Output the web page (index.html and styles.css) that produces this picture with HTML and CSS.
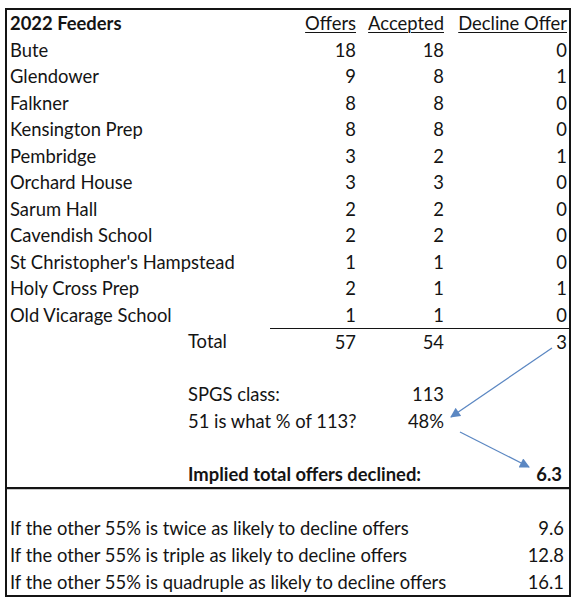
FILE: index.html
```html
<!DOCTYPE html>
<html>
<head>
<meta charset="utf-8">
<link rel="stylesheet" href="styles.css">
</head>
<body>
<div class="sheet">
  <div class="top">
    <div class="cell name bold">2022 Feeders</div>
    <div class="cell num"><span class="u">Offers</span></div>
    <div class="cell num"><span class="u">Accepted</span></div>
    <div class="cell num"><span class="u">Decline Offer</span></div>

    <div class="cell name">Bute</div><div class="cell num">18</div><div class="cell num">18</div><div class="cell num">0</div>
    <div class="cell name">Glendower</div><div class="cell num">9</div><div class="cell num">8</div><div class="cell num">1</div>
    <div class="cell name">Falkner</div><div class="cell num">8</div><div class="cell num">8</div><div class="cell num">0</div>
    <div class="cell name">Kensington Prep</div><div class="cell num">8</div><div class="cell num">8</div><div class="cell num">0</div>
    <div class="cell name">Pembridge</div><div class="cell num">3</div><div class="cell num">2</div><div class="cell num">1</div>
    <div class="cell name">Orchard House</div><div class="cell num">3</div><div class="cell num">3</div><div class="cell num">0</div>
    <div class="cell name">Sarum Hall</div><div class="cell num">2</div><div class="cell num">2</div><div class="cell num">0</div>
    <div class="cell name">Cavendish School</div><div class="cell num">2</div><div class="cell num">2</div><div class="cell num">0</div>
    <div class="cell name">St Christopher's Hampstead</div><div class="cell num">1</div><div class="cell num">1</div><div class="cell num">0</div>
    <div class="cell name">Holy Cross Prep</div><div class="cell num">2</div><div class="cell num">1</div><div class="cell num">1</div>
    <div class="cell name">Old Vicarage School</div><div class="cell num">1</div><div class="cell num">1</div><div class="cell num">0</div>

    <div class="cell colb">Total</div><div class="cell num ruled">57</div><div class="cell num ruled">54</div><div class="cell num ruled">3</div>

    <div class="cell blank"></div>

    <div class="cell colb-c">SPGS class:</div><div class="cell num">113</div><div class="cell filler"></div>
    <div class="cell colb-c">51 is what % of 113?</div><div class="cell num">48%</div><div class="cell filler"></div>

    <div class="cell blank"></div>

    <div class="cell colb-d bold">Implied total offers declined:</div><div class="cell num bold result">6.3</div>
  </div>
  <div class="bottom">
    <div class="cell blank2"></div>
    <div class="cell">If the other 55% is twice as likely to decline offers</div><div class="cell num">9.6</div>
    <div class="cell">If the other 55% is triple as likely to decline offers</div><div class="cell num">12.8</div>
    <div class="cell">If the other 55% is quadruple as likely to decline offers</div><div class="cell num">16.1</div>
  </div>
</div>
<svg class="arrows" width="575" height="600" viewBox="0 0 575 600">
  <defs>
    <marker id="head" viewBox="0 0 10 10" refX="9" refY="5" markerWidth="11" markerHeight="10" markerUnits="userSpaceOnUse" orient="auto">
      <path d="M0 0 L10 5 L0 10 Z" fill="#5b87c2"/>
    </marker>
  </defs>
  <line x1="552" y1="348" x2="451" y2="417" stroke="#5b87c2" stroke-width="1.3" marker-end="url(#head)"/>
  <line x1="460" y1="432" x2="529" y2="467" stroke="#5b87c2" stroke-width="1.3" marker-end="url(#head)"/>
</svg>
</body>
</html>
```

FILE: styles.css
```css
html, body {
  margin: 0;
  padding: 0;
  background: #ffffff;
}

body {
  position: relative;
  width: 575px;
  height: 600px;
  font-family: Lato, "Open Sans", sans-serif;
  font-size: 18.4px;
  color: #141414;
}

.sheet {
  position: absolute;
  left: 5px;
  top: 8px;
  width: 562px;
  border: 2px solid #141414;
}

.top {
  display: grid;
  grid-template-columns: 178px 85px 88px 88px 123px;
  grid-auto-rows: 26.5px;
  border-bottom: 2px solid #141414;
}

.cell {
  display: flex;
  align-items: center;
  white-space: nowrap;
  padding-left: 3px;
}

.name {
  grid-column: 1 / span 2;
}

.num {
  justify-content: flex-end;
  padding-left: 0;
  padding-right: 2px;
}

.bold {
  font-weight: 700;
}

.u {
  text-decoration: underline;
  text-underline-offset: 2px;
  text-decoration-thickness: 1px;
}

.colb {
  grid-column: 2 / span 1;
}

.ruled {
  border-top: 1.5px solid #141414;
}

.blank {
  grid-column: 1 / span 5;
}

.colb-c {
  grid-column: 2 / span 2;
}

.filler {
  grid-column: 5 / span 1;
}

.colb-d {
  grid-column: 2 / span 3;
}

.result {
  padding-right: 7px;
}

.bottom {
  display: grid;
  grid-template-columns: 1fr auto;
  grid-template-rows: 24px;
  grid-auto-rows: 27px;
  border-top: 1px solid #c8c8c8;
}

.bottom .num {
  padding-right: 5px;
}

.blank2 {
  grid-column: 1 / span 2;
}

.arrows {
  position: absolute;
  left: 0;
  top: 0;
  pointer-events: none;
}
```
